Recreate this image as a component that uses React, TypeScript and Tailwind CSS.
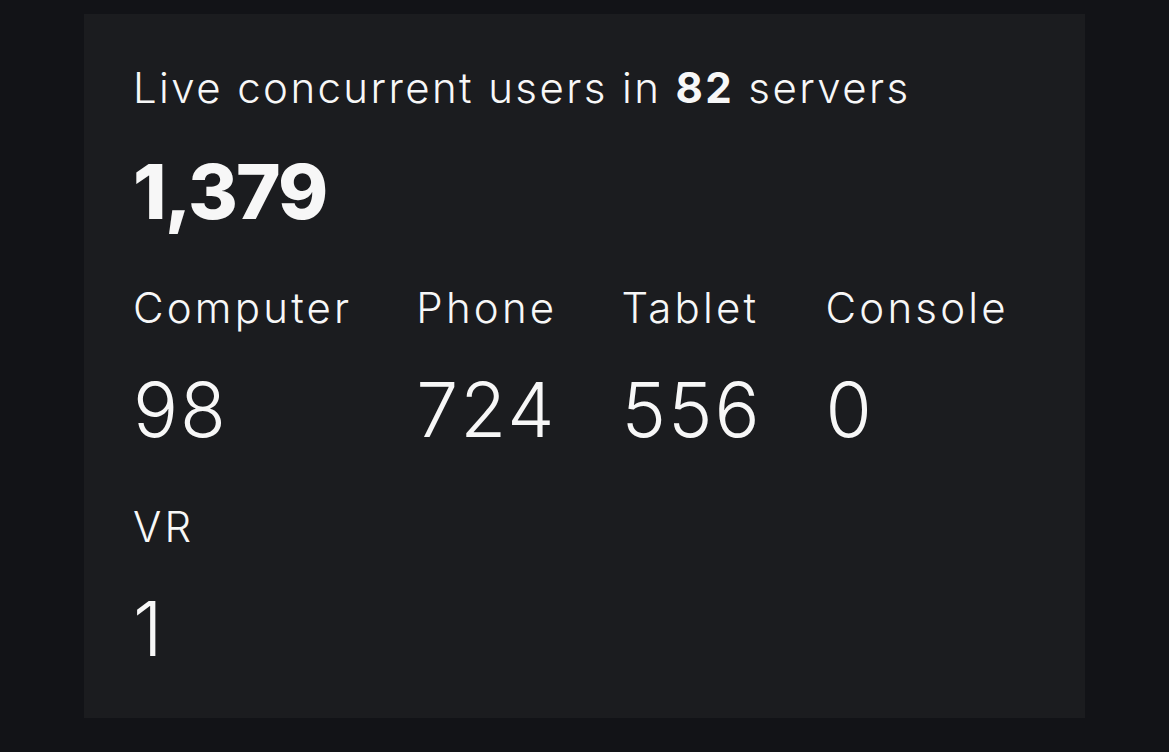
import React from 'react';

const devices = [
  { label: 'Computer', count: '98' },
  { label: 'Phone', count: '724' },
  { label: 'Tablet', count: '556' },
  { label: 'Console', count: '0' },
  { label: 'VR', count: '1' },
];

const App: React.FC = () => {
  return (
    <div className="min-h-[752px] w-full bg-[#121317] pt-[14px] pb-[34px] font-['Inter','Liberation_Sans',sans-serif] text-[#f7f7f7]">
      <div className="mx-[84px] bg-[#1b1c1f] pl-[49px] pr-[49px] pt-[50px] pb-[49px]">
        <h2 className="text-[42px] leading-[48px] font-light tracking-[2.4px]">
          Live concurrent users in <span className="font-bold">82</span> servers
        </h2>
        <div className="mt-[39px] text-[76px] leading-[80px] font-extrabold tracking-tight">1,379</div>
        <div className="mt-[53px] flex flex-wrap gap-x-[64px] gap-y-[53px]">
          {devices.map(d => (
            <div key={d.label} className="flex flex-col">
              <span className="text-[42px] leading-[48px] font-light tracking-[3.2px]">{d.label}</span>
              <span className="mt-[38px] text-[75px] leading-[80px] font-light tracking-[2px]">{d.count}</span>
            </div>
          ))}
        </div>
      </div>
    </div>
  );
};

export default App;
